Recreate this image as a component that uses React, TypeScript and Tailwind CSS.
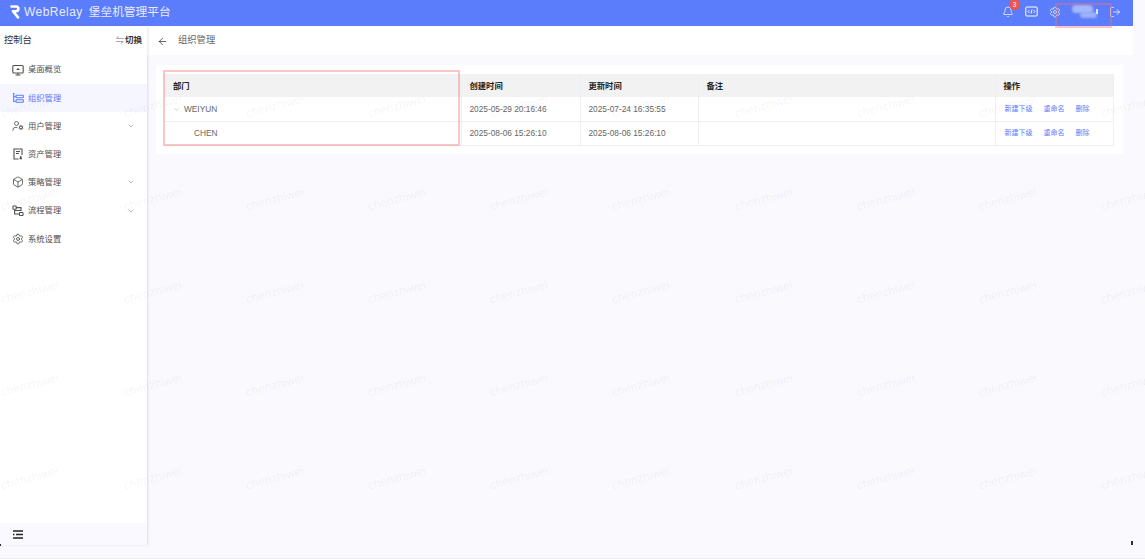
import { Bell, Box, ChevronDown, ArrowLeft, LogOut, Settings, UserCog } from 'lucide-react';

const font = { fontFamily: '"Liberation Sans", "Noto Sans CJK SC", sans-serif' };

// Sidebar menu
const menuItems = [
  { label: '桌面概览', icon: <DesktopIcon /> },
  { label: '组织管理', icon: <OrgIcon />, active: true },
  { label: '用户管理', icon: <UserCog size={12} strokeWidth={1.6} />, arrow: true },
  { label: '资产管理', icon: <AssetIcon /> },
  { label: '策略管理', icon: <Box size={12} strokeWidth={1.7} />, arrow: true },
  { label: '流程管理', icon: <FlowIcon />, arrow: true },
  { label: '系统设置', icon: <Settings size={12} strokeWidth={1.7} /> },
];

const rows = [
  { name: 'WEIYUN', created: '2025-05-29 20:16:46', updated: '2025-07-24 16:35:55', root: true },
  { name: 'CHEN', created: '2025-08-06 15:26:10', updated: '2025-08-06 15:26:10', root: false },
];

function DesktopIcon() {
  return (
    <svg width="12" height="12" viewBox="0 0 12 12" fill="none" stroke="currentColor" strokeWidth="1.1">
      <rect x=".8" y="1.500" width="10.400" height="7.500" rx="1" />
      <path d="M3.500 11h5M6 9v2M4.500 5.500h3M6 4v1.500" />
    </svg>
  );
}

function OrgIcon() {
  return (
    <svg width="12" height="12" viewBox="0 0 12 12" fill="none" stroke="currentColor" strokeWidth="1.100">
      <path d="M1 1.500h1.500M1.700 1.500v8h1.800M1.700 4.500h1.800" />
      <rect x="4" y="3.300" width="7.300" height="2.400" rx=".5" />
      <rect x="4" y="7.800" width="7.300" height="2.400" rx=".5" />
    </svg>
  );
}

function AssetIcon() {
  return (
    <svg width="12" height="12" viewBox="0 0 12 12" fill="none" stroke="currentColor" strokeWidth="1.100">
      <path d="M6.500 11H2V1h8v6" />
      <path d="M4 3.500h4M4 5.500h3" />
      <path d="M8.700 8v3M7.500 10.500h2.500" strokeWidth="1.400" />
    </svg>
  );
}

function FlowIcon() {
  return (
    <svg width="12" height="12" viewBox="0 0 12 12" fill="none" stroke="currentColor" strokeWidth="1.100">
      <rect x="1" y="1" width="3.200" height="3.200" rx=".5" />
      <rect x="7.500" y="7.500" width="3.500" height="3" rx=".5" />
      <path d="M4.200 2.600H9v2.900H2.600v3.500h4.900" />
    </svg>
  );
}

function Logo() {
  return (
    <svg width="10" height="14" viewBox="0 0 10 14" fill="none" stroke="white" strokeWidth="2.600" strokeLinecap="round" strokeLinejoin="round">
      <path d="M1.500 1.500h4.500a2.200 2.200 0 0 1 0 4.700H3l5 6.200" />
    </svg>
  );
}

function CodeIcon() {
  return (
    <svg width="13" height="12" viewBox="0 0 13 12" fill="none" stroke="white" strokeWidth="1">
      <rect x=".8" y="1" width="11.400" height="9" rx="1" />
      <path d="M4.500 4 3 5.500 4.500 7M8.500 4 10 5.500 8.500 7M7 3.500 6 7.500" strokeWidth=".9" />
    </svg>
  );
}

function Header() {
  return (
    <header className="h-[26px] bg-[#5b7cfb] flex items-center pl-[10px] pb-[3px] text-white shrink-0">
      <Logo />
      <span className="ml-[4px] text-[12px] tracking-[0.45px] text-[#e8ecff]">WebRelay</span>
      <span className="ml-[6px] text-[11.700px] text-[#e8ecff]">堡垒机管理平台</span>
      <div className="ml-auto flex items-center gap-[11px] pr-[12px]">
        <div className="relative">
          <Bell size={12} strokeWidth={1.4} />
          <span className="absolute -top-[7px] left-[7px] w-[11px] h-[11px] rounded-full bg-[#ef5350] text-[7px] leading-[11px] text-center">3</span>
        </div>
        <CodeIcon />
        <Settings size={12} strokeWidth={1.4} />
        <div className="relative w-[26px] h-[14px]">
          <div className="absolute left-0 top-0 w-[21px] h-[8px] rounded-sm bg-[#a5b8fd] blur-[1px]" />
          <div className="absolute left-[8px] top-[7px] w-[17px] h-[6px] rounded-sm bg-[#9db1fd] blur-[1px]" />
          <div className="absolute right-0 top-[4px] w-[2px] h-[5px] bg-[#dfe5ff] blur-[0.5px]" />
        </div>
        <LogOut size={12} strokeWidth={1.4} />
      </div>
    </header>
  );
}

function Sidebar() {
  return (
    <aside className="w-[147px] shrink-0 bg-white flex flex-col shadow-[1px_0_2px_rgba(120,120,160,0.2)] z-10">
      <div className="h-[28px] flex items-center justify-between pl-[4px] pr-[5px] pt-[1px] shrink-0">
        <span className="text-[9.300px] text-[#333]">控制台</span>
        <span className="text-[8.500px] text-[#333] font-bold flex items-center gap-[1px]">
          <span className="font-normal text-[#666]">⇋</span>切换
        </span>
      </div>
      <nav className="flex-1 pt-[1.500px]">
        {menuItems.map((item) => (
          <div
            key={item.label}
            className={`h-[28.200px] flex items-center pl-[12px] pr-[12px] ${item.active ? 'bg-[#f5f6ff] text-[#5b7cfb]' : 'text-[#505050]'}`}
          >
            <span className="w-[12px] flex justify-center">{item.icon}</span>
            <span className="ml-[4px] text-[8.300px]">{item.label}</span>
            {item.arrow && <ChevronDown size={8} strokeWidth={1.4} className="ml-auto text-[#777]" />}
          </div>
        ))}
      </nav>
      <div className="h-[22px] bg-[#f9f9ff] flex items-center pl-[13px] shrink-0">
        <svg width="10" height="9" viewBox="0 0 10 9" fill="none" stroke="#222" strokeWidth="1.300">
          <path d="M0 1h10M3 4.500h7M0 8h10M0 4.500h1.500" />
        </svg>
      </div>
    </aside>
  );
}

function Main() {
  const cell = 'border-r border-b border-[#eeeff3] h-[24px] pt-[1px]';
  const head = 'bg-[#f2f2f2] border-r border-[#eeeff3] text-left text-[8.300px] text-[#222] font-bold h-[23px] pt-[1px]';
  const text = 'px-[8px] text-[8.300px] text-[#666]';
  return (
    <main className="flex-1 flex flex-col min-w-0">
      <div className="h-[29px] bg-white flex items-center pl-[10px] pt-[1px] shrink-0">
        <ArrowLeft size={11} strokeWidth={1.500} className="text-[#222]" />
        <span className="ml-[10px] text-[9.300px] text-[#666]">组织管理</span>
      </div>
      <section className="mt-[10px] ml-[9px] mr-[10px] bg-white pt-[9px] pl-[8px] pr-[10px] pb-[8px]">
        <table className="w-full table-fixed border-collapse">
          <colgroup>
            <col className="w-[297px]" />
            <col className="w-[119px]" />
            <col className="w-[118px]" />
            <col className="w-[297px]" />
            <col className="w-[118px]" />
          </colgroup>
          <thead>
            <tr>
              <th className={`${head} px-[9px]`}>部门</th>
              <th className={`${head} px-[8px]`}>创建时间</th>
              <th className={`${head} px-[8px]`}>更新时间</th>
              <th className={`${head} px-[8px]`}>备注</th>
              <th className={`${head} px-[8px]`}>操作</th>
            </tr>
          </thead>
          <tbody>
            {rows.map((row) => (
              <tr key={row.name}>
                <td className={`${cell} pl-[9px] text-[8.300px] text-[#666]`}>
                  {row.root ? (
                    <span className="flex items-center gap-[4px]">
                      <ChevronDown size={7} strokeWidth={1.3} className="text-[#777]" />
                      {row.name}
                    </span>
                  ) : (
                    <span className="pl-[21px]">{row.name}</span>
                  )}
                </td>
                <td className={`${cell} ${text}`}>{row.created}</td>
                <td className={`${cell} ${text}`}>{row.updated}</td>
                <td className={`${cell} ${text}`}></td>
                <td className={`${cell} border-l pl-[9px] text-[7px] text-[#5b7cfb]`}>
                  <span className="flex gap-[11px]">
                    <span>新建下级</span>
                    <span>重命名</span>
                    <span>删除</span>
                  </span>
                </td>
              </tr>
            ))}
          </tbody>
        </table>
      </section>
    </main>
  );
}

// Faint repeating user name laid over the whole page
function Watermark() {
  const marks = Array.from({ length: 50 });
  return (
    <div className="absolute left-[-31px] top-[59.500px] w-[1222px] grid grid-cols-[repeat(10,122.200px)] auto-rows-[93px] pointer-events-none z-20">
      {marks.map((_, i) => (
        <div key={i} className="flex items-center justify-center">
          <span className="text-[12px] text-black/[0.06] -rotate-[15deg]">chenzhiwei</span>
        </div>
      ))}
    </div>
  );
}

export default function App() {
  return (
    <div className="relative w-[1145px] h-[559px] overflow-hidden bg-[#f9f9fe] border-b border-[#eeeef2]" style={font}>
      <div className="w-[1133px] h-[545px] flex flex-col">
        <Header />
        <div className="flex-1 flex min-h-0">
          <Sidebar />
          <Main />
        </div>
      </div>
      <Watermark />
      {/* red annotation boxes from the original capture */}
      <div className="absolute left-[163px] top-[70px] w-[297px] h-[76px] border-2 border-[#f87171]/40 pointer-events-none z-30" />
      <div className="absolute left-[1055px] top-[3px] w-[57px] h-[25px] border-2 border-[#f87171]/40 pointer-events-none z-30" />
      {/* capture artefacts at the window corners */}
      <div className="absolute left-0 top-[544px] w-[1px] h-[2px] bg-[#3a2a20] z-30" />
      <div className="absolute left-[1131px] top-[541px] w-[2px] h-[4px] bg-[#3a2a20] z-30" />
    </div>
  );
}
